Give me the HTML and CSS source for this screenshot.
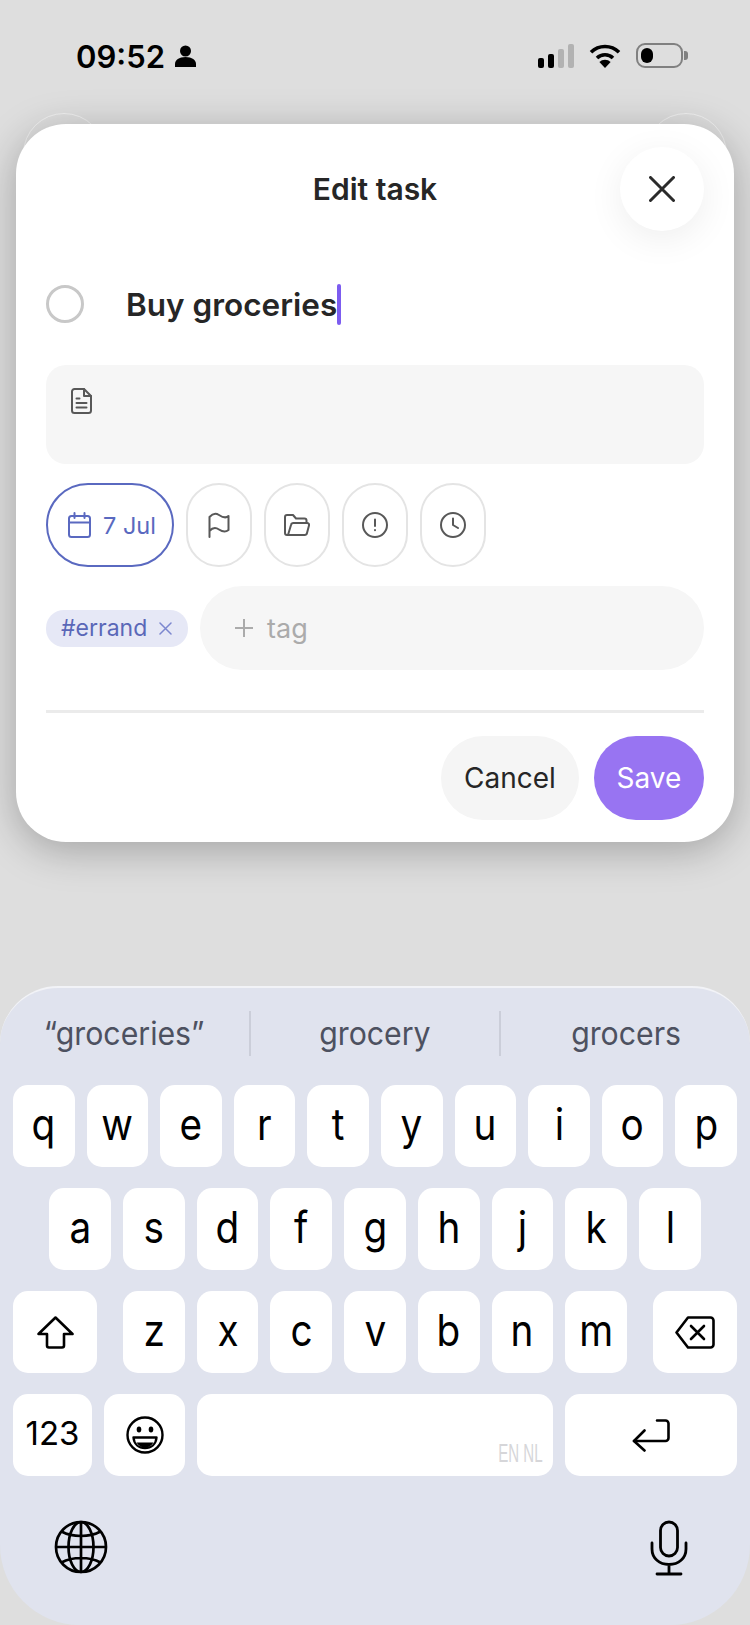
FILE: index.html
```html
<!DOCTYPE html>
<html lang="en">
<head>
  <meta charset="UTF-8" />
  <meta name="viewport" content="width=device-width, initial-scale=1.0"/>
  <title>Edit task</title>
  <link rel="stylesheet" href="styles.css">
</head>
<body>
  <div class="status-bar">
    <div class="status-left">
      <span class="clock">09:52</span>
      <svg class="person" width="21" height="22" viewBox="0 0 21 22"><circle cx="10.5" cy="6" r="5.5" fill="#000"/><path d="M0 22v-3c0-4 4-7 10.5-7S21 15 21 19v3z" fill="#000"/></svg>
    </div>
    <div class="status-right">
      <div class="signal">
        <span class="bar bar-1"></span><span class="bar bar-2"></span><span class="bar bar-3"></span><span class="bar bar-4"></span>
      </div>
      <svg width="32" height="24" viewBox="0 0 32 24" fill="none" stroke="#000" stroke-width="3.6"><path d="M2 8.2A20 20 0 0 1 30 8.2"/><path d="M8 14A11.5 11.5 0 0 1 24 14"/><path d="M16 24l-5.600-6A8 8 0 0 1 21.600 18z" fill="#000" stroke="none"/></svg>
      <div class="battery"><span class="battery-fill"></span></div>
    </div>
  </div>

  <div class="card">
    <span class="card-back card-back-left"></span>
    <span class="card-back card-back-right"></span>
    <div class="card-header">
      <h1>Edit task</h1>
      <button class="close-btn">
        <svg width="26" height="26" viewBox="0 0 26 26" fill="none" stroke="#2b2b2b" stroke-width="3" stroke-linecap="round"><path d="M1.500 1.500l23 23M24.500 1.500l-23 23"/></svg>
      </button>
    </div>

    <div class="task-row">
      <span class="radio"></span>
      <span class="task-title">Buy groceries</span><span class="caret"></span>
    </div>

    <div class="note-box">
      <svg width="21" height="26" viewBox="0 0 21 26" fill="none" stroke="#585858" stroke-width="2" stroke-linecap="round" stroke-linejoin="round"><path d="M3.500 1H13l7 7v14.500a2.500 2.500 0 0 1-2.500 2.500h-14A2.500 2.500 0 0 1 1 22.500v-19A2.500 2.500 0 0 1 3.500 1z"/><path d="M13 1v7h7M5.500 10.500h3M5.500 15h10M5.500 19.500h10"/></svg>
    </div>

    <div class="chips">
      <div class="chip chip-date">
        <svg width="23" height="26" viewBox="0 0 23 26" fill="none" stroke="#5a69c0" stroke-width="2" stroke-linecap="round"><rect x="1" y="4" width="21" height="21" rx="2.500"/><path d="M1 10.500h21M6.500 1v5M16.500 1v5"/></svg>
        <span>7 Jul</span>
      </div>
      <div class="chip">
        <svg width="22" height="26" viewBox="0 0 22 26" fill="none" stroke="#585858" stroke-width="2" stroke-linecap="round" stroke-linejoin="round"><path d="M1.500 25V5C5 1 8 1 11 3s7 3.500 9.500 1v14c-3 2.500-6.500 1.500-9.500-.5S5 15 1.500 19"/></svg>
      </div>
      <div class="chip">
        <svg width="26" height="22" viewBox="0 0 26 22" fill="none" stroke="#585858" stroke-width="2" stroke-linecap="round" stroke-linejoin="round"><path d="M4 21H3a2 2 0 0 1-2-2V3a2 2 0 0 1 2-2h6l3 3.500h8.500a2 2 0 0 1 2 2V9"/><path d="M4 21l3-10a2.500 2.500 0 0 1 2.400-2H23a2 2 0 0 1 2 2.500L23 19a2.500 2.500 0 0 1-2.400 2z"/></svg>
      </div>
      <div class="chip">
        <svg width="26" height="26" viewBox="0 0 26 26" fill="none" stroke="#585858" stroke-width="2" stroke-linecap="round"><circle cx="13" cy="13" r="12"/><path d="M13 7.500v6.500M13 18v.2"/></svg>
      </div>
      <div class="chip">
        <svg width="26" height="26" viewBox="0 0 26 26" fill="none" stroke="#585858" stroke-width="2" stroke-linecap="round" stroke-linejoin="round"><circle cx="13" cy="13" r="12"/><path d="M13 6.500V13l5 3"/></svg>
      </div>
    </div>

    <div class="tag-row">
      <div class="tag">
        <span>#errand</span>
        <svg width="13" height="13" viewBox="0 0 13 13" stroke="#7c87cf" stroke-width="1.500" stroke-linecap="round"><path d="M1 1l11 11M12 1L1 12"/></svg>
      </div>
      <div class="tag-input">
        <svg width="18" height="18" viewBox="0 0 18 18" stroke="#ababab" stroke-width="2"><path d="M9 0v18M0 9h18"/></svg>
        <span>tag</span>
      </div>
    </div>

    <div class="divider"></div>

    <div class="actions">
      <button class="btn btn-cancel">Cancel</button>
      <button class="btn btn-save">Save</button>
    </div>
  </div>

  <div class="keyboard">
    <div class="suggestions">
      <div class="suggestion"><span>“groceries”</span></div>
      <div class="suggestion"><span>grocery</span></div>
      <div class="suggestion"><span>grocers</span></div>
    </div>

    <div class="keys">
      <div class="key-row">
        <div class="key"><span>q</span></div><div class="key"><span>w</span></div><div class="key"><span>e</span></div><div class="key"><span>r</span></div><div class="key"><span>t</span></div><div class="key"><span>y</span></div><div class="key"><span>u</span></div><div class="key"><span>i</span></div><div class="key"><span>o</span></div><div class="key"><span>p</span></div>
      </div>
      <div class="key-row row-home">
        <div class="key"><span>a</span></div><div class="key"><span>s</span></div><div class="key"><span>d</span></div><div class="key"><span>f</span></div><div class="key"><span>g</span></div><div class="key"><span>h</span></div><div class="key"><span>j</span></div><div class="key"><span>k</span></div><div class="key"><span>l</span></div>
      </div>
      <div class="key-row row-shift">
        <div class="key key-side">
          <svg width="37" height="33" viewBox="0 0 37 33" fill="none" stroke="#000" stroke-width="2.600" stroke-linejoin="round"><path d="M18.500 1.500L35.500 18H27v11.500a2 2 0 0 1-2 2H12a2 2 0 0 1-2-2V18H1.500z"/></svg>
        </div>
        <div class="letters">
          <div class="key"><span>z</span></div><div class="key"><span>x</span></div><div class="key"><span>c</span></div><div class="key"><span>v</span></div><div class="key"><span>b</span></div><div class="key"><span>n</span></div><div class="key"><span>m</span></div>
        </div>
        <div class="key key-side">
          <svg width="40" height="33" viewBox="0 0 40 33" fill="none" stroke="#000" stroke-width="2.600" stroke-linecap="round" stroke-linejoin="round"><path d="M13 1.500h22.500a3 3 0 0 1 3 3v24a3 3 0 0 1-3 3H13L1.500 16.500z"/><path d="M16 10l13 13M29 10L16 23"/></svg>
        </div>
      </div>
      <div class="key-row row-bottom">
        <div class="key key-num"><span class="label-num">123</span></div>
        <div class="key key-emoji">
          <svg width="38" height="38" viewBox="0 0 38 38" fill="none" stroke="#000" stroke-width="2.400"><circle cx="19" cy="19" r="17.500"/><ellipse cx="13" cy="13.500" rx="2.300" ry="3" fill="#000" stroke="none"/><ellipse cx="25" cy="13.500" rx="2.300" ry="3" fill="#000" stroke="none"/><path d="M7.500 21.500h23c-.5 7-5.500 10.500-11.500 10.500S8 28.500 7.500 21.500z" stroke-linejoin="round"/><path d="M10.500 26.500h17c-2 3.500-5 5-8.500 5s-6.500-1.500-8.500-5z" fill="#000" stroke="none"/></svg>
        </div>
        <div class="key key-space"><span class="lang">EN NL</span></div>
        <div class="key key-return">
          <svg width="38" height="33" viewBox="0 0 38 33" fill="none" stroke="#000" stroke-width="2.600" stroke-linecap="round" stroke-linejoin="round"><path d="M25 1.500h8.500a3 3 0 0 1 3 3V19a3 3 0 0 1-3 3H2"/><path d="M12.500 11.500L2 22l10.500 9.500"/></svg>
        </div>
      </div>
    </div>

    <div class="keyboard-bottom">
      <svg width="54" height="54" viewBox="0 0 54 54" fill="none" stroke="#000" stroke-width="2.700"><circle cx="27" cy="27" r="25"/><ellipse cx="27" cy="27" rx="12.500" ry="25"/><path d="M27 2v50M2 27h50M7.500 11.500c11 6 28 6 39 0M7.500 42.500c11-6 28-6 39 0"/></svg>
      <svg width="38" height="56" viewBox="0 0 38 56" fill="none" stroke="#000" stroke-width="2.800" stroke-linecap="round"><rect x="10.500" y="2" width="17" height="34" rx="8.500"/><path d="M2 23v6c0 9.500 7.500 15.500 17 15.500S36 38.500 36 29v-6M19 44.500V54M7 54h24"/></svg>
    </div>
  </div>
</body>
</html>
```

FILE: styles.css
```css
* {
  box-sizing: border-box;
}

body {
  margin: 0;
  width: 750px;
  height: 1625px;
  overflow: hidden;
  background: #dedede;
  font-family: 'Inter', 'Liberation Sans', sans-serif;
  display: flex;
  flex-direction: column;
}

/* status bar */
.status-bar {
  height: 124px;
  padding: 43px 67px 0 76px;
  display: flex;
  justify-content: space-between;
  align-items: flex-start;
}

.status-left {
  display: flex;
  align-items: center;
  gap: 10px;
  height: 26px;
}

.clock {
  font-size: 31px;
  font-weight: 600;
  color: #000;
}

.status-right {
  display: flex;
  align-items: flex-end;
  height: 25px;
}

.signal {
  display: flex;
  align-items: flex-end;
  gap: 4px;
  margin-right: 15px;
}

.bar {
  width: 6px;
  border-radius: 2px;
  background: #000;
}

.bar-1 { height: 10px; }
.bar-2 { height: 14px; }
.bar-3 { height: 19px; background: #b2b2b2; }
.bar-4 { height: 24px; background: #b2b2b2; }

.battery {
  position: relative;
  width: 47px;
  height: 25px;
  margin-left: 15px;
  padding: 3px;
  border: 2px solid #808080;
  border-radius: 9px;
}

.battery::after {
  content: '';
  position: absolute;
  right: -7px;
  top: 6px;
  width: 4px;
  height: 9px;
  background: #808080;
  border-radius: 0 3px 3px 0;
}

.battery-fill {
  display: block;
  width: 12px;
  height: 100%;
  background: #000;
  border-radius: 6px;
}

/* task card */
.card {
  position: relative;
  margin: 0 16px;
  height: 718px;
  padding: 23px 30px;
  background: #fff;
  border-radius: 50px;
  box-shadow: 0 8px 40px rgba(0,0,0,0.27);
}

/* round outlines peeking out behind the top corners */
.card-back {
  position: absolute;
  z-index: -1;
  top: -11px;
  width: 82px;
  height: 82px;
  border: 1.5px solid rgba(255,255,255,0.55);
  border-radius: 50%;
}

.card-back-left {
  left: 7px;
}

.card-back-right {
  right: 7px;
}

.card-header {
  position: relative;
  height: 84px;
  display: flex;
  align-items: center;
  justify-content: center;
}

.card-header h1 {
  margin: 0;
  font-size: 30px;
  font-weight: 600;
  color: #262626;
}

.close-btn {
  position: absolute;
  right: 0;
  top: 0;
  width: 84px;
  height: 84px;
  border: none;
  border-radius: 50%;
  background: #fff;
  box-shadow: 0 8px 36px rgba(0,0,0,0.07);
  display: flex;
  align-items: center;
  justify-content: center;
}

.task-row {
  display: flex;
  align-items: center;
  height: 42px;
  margin-top: 52px;
}

.radio {
  width: 38px;
  height: 38px;
  margin-right: 42px;
  border: 3px solid #c8c8c8;
  border-radius: 50%;
}

.task-title {
  font-size: 31.5px;
  font-weight: 600;
  color: #262626;
}

.caret {
  width: 4px;
  height: 41px;
  background: #7c5cf0;
  border-radius: 2px;
}

.note-box {
  height: 99px;
  margin-top: 40px;
  padding: 23px 25px;
  background: #f6f6f6;
  border-radius: 20px;
}

.chips {
  display: flex;
  gap: 12px;
  margin-top: 19px;
}

.chip {
  width: 66px;
  height: 84px;
  border: 2px solid #e4e4e4;
  border-radius: 33px;
  display: flex;
  align-items: center;
  justify-content: center;
}

.chip-date {
  width: 128px;
  padding-left: 20px;
  justify-content: flex-start;
  gap: 12px;
  border-color: #5a69c0;
  border-radius: 42px;
  color: #5a69c0;
  font-size: 23.5px;
  font-weight: 400;
}

.tag-row {
  display: flex;
  align-items: center;
  gap: 12px;
  margin-top: 19px;
}

.tag {
  width: 142px;
  height: 37px;
  padding-left: 15px;
  display: flex;
  align-items: center;
  gap: 12px;
  background: #e6e8f6;
  border-radius: 18px;
  color: #5a67b8;
  font-size: 23px;
}

.tag-input {
  flex: 1;
  height: 84px;
  padding-left: 35px;
  display: flex;
  align-items: center;
  gap: 14px;
  background: #f6f6f6;
  border-radius: 42px;
  color: #ababab;
  font-size: 27px;
}

.divider {
  height: 3px;
  margin-top: 40px;
  background: #ebebeb;
}

.actions {
  display: flex;
  justify-content: flex-end;
  gap: 15px;
  margin-top: 23px;
}

.btn {
  height: 84px;
  padding: 0;
  border: none;
  border-radius: 42px;
  font-family: inherit;
  font-size: 28px;
  font-weight: 400;
}

.btn-cancel {
  width: 138px;
  background: #f5f5f5;
  color: #262626;
}

.btn-save {
  width: 110px;
  background: #9874f2;
  color: #fff;
}

/* keyboard */
.keyboard {
  margin-top: auto;
  height: 639px;
  background: #e0e3ee;
  border-top: 2px solid #f2f3f7;
  border-radius: 58px 58px 80px 80px;
}

.suggestions {
  display: flex;
  height: 45px;
  margin-top: 23px;
}

.suggestion {
  flex: 1;
  display: flex;
  align-items: center;
  justify-content: center;
  color: #4d5160;
  font-size: 32px;
}

.suggestion span {
  transform: scaleX(0.945);
}

.suggestion + .suggestion {
  border-left: 2px solid #cbced9;
}

.keys {
  display: flex;
  flex-direction: column;
  gap: 21px;
  margin-top: 29px;
  padding: 0 13px;
}

.key-row {
  display: flex;
  gap: 12px;
}

.row-home {
  padding: 0 36px;
}

.row-shift {
  justify-content: space-between;
}

.letters {
  display: flex;
  gap: 12px;
  width: 504px;
}

.key {
  flex: 1;
  height: 82px;
  background: #fff;
  border-radius: 15px;
  display: flex;
  align-items: center;
  justify-content: center;
  color: #000;
  font-size: 44px;
}

.key span {
  display: block;
  margin-bottom: 4px;
  transform: scaleX(0.88);
}

.key-side {
  flex: none;
  width: 84px;
}

.key .label-num {
  font-size: 33px;
  transform: none;
}

.key-num {
  flex: none;
  width: 79px;
}

.key-emoji {
  flex: none;
  width: 81px;
}

.key-space {
  flex: none;
  width: 356px;
  align-items: flex-end;
  justify-content: flex-end;
}

.key .lang {
  margin: 0 10px 7px 0;
  color: #d6d6d9;
  font-family: 'Liberation Sans', sans-serif;
  font-size: 26px;
  transform: scaleX(0.58);
  transform-origin: right;
}

.key-return {
  flex: none;
  width: 172px;
}

.keyboard-bottom {
  display: flex;
  justify-content: space-between;
  margin-top: 44px;
  padding: 0 62px 0 54px;
}
```
